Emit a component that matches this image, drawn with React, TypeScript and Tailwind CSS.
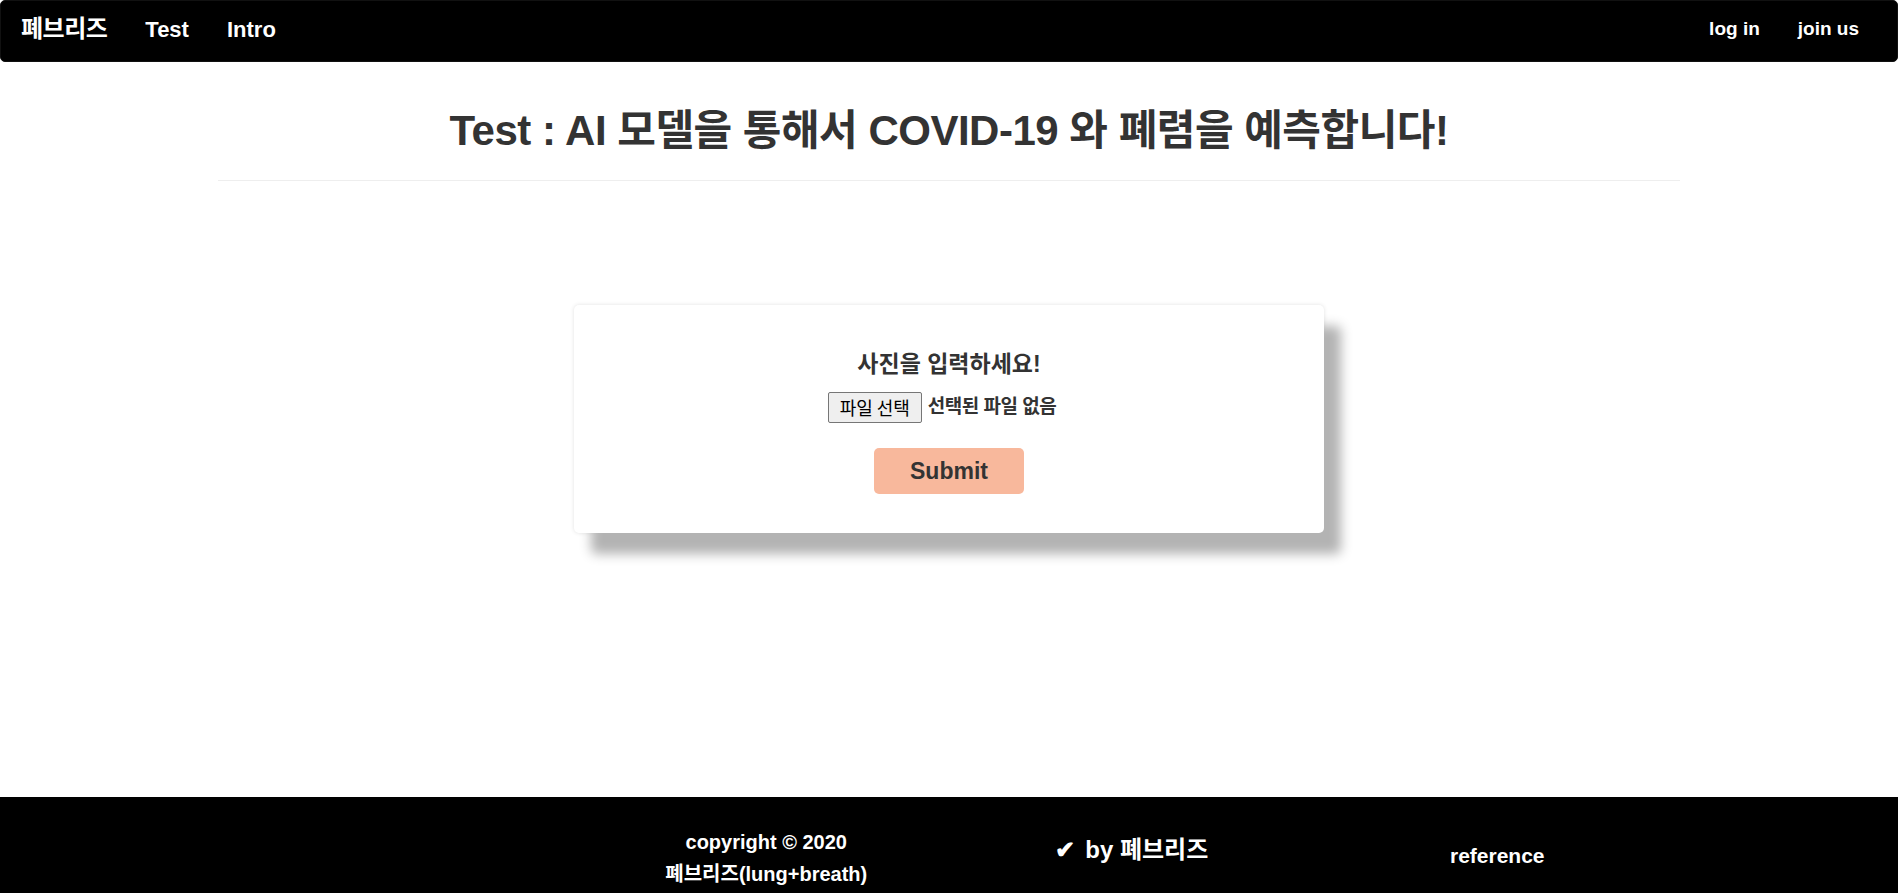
import React from "react";

const font = { fontFamily: '"Liberation Sans", "Noto Sans CJK KR", sans-serif' };

function Navbar() {
  return (
    <nav className="flex h-[62px] items-center justify-between rounded-[5px] border border-[#111] bg-black pb-1 font-bold text-white">
      <div className="flex items-center">
        <a className="pl-5 pr-[19px] text-[24px] tracking-[-0.5px]">폐브리즈</a>
        <a className="px-[19px] text-[22px]">Test</a>
        <a className="px-[19px] text-[22px]">Intro</a>
      </div>
      <div className="flex items-center pr-[19px]">
        <a className="px-[19px] text-[19px]">log in</a>
        <a className="px-[19px] text-[19px]">join us</a>
      </div>
    </nav>
  );
}

function UploadCard() {
  return (
    <div className="mx-auto mt-[124px] flex h-[228px] w-[750px] flex-col items-center rounded-[5px] bg-white pt-[45px] text-[#333] shadow-[17px_21px_12px_#b3b3b3,0_0_4px_rgba(0,0,0,0.12)]">
      <h3 className="text-[23px] font-bold leading-[28px]">사진을 입력하세요!</h3>
      <div className="mt-[14px] flex items-center pr-[14px]">
        <button
          className="h-[31px] w-[94px] rounded-[2px] border border-[#767676] bg-[#efefef] text-[18px] font-normal text-black"
          style={{ fontFamily: '"Noto Sans CJK KR", sans-serif' }}
        >
          파일 선택
        </button>
        <span className="ml-[6px] text-[19px] font-bold tracking-[-0.5px]">선택된 파일 없음</span>
      </div>
      <button className="mt-[25px] h-[46px] w-[150px] rounded-[5px] bg-[#f8b89c] text-[23px] font-bold text-[#333]">
        Submit
      </button>
    </div>
  );
}

function Footer() {
  return (
    <footer className="h-[110px] bg-black text-white">
      <div className="mx-auto grid w-[1462px] grid-cols-4 font-bold">
        <div />
        <div className="flex flex-col items-center pt-[29px] text-[20px] leading-[32px]">
          <span>copyright © 2020</span>
          <span>폐브리즈(lung+breath)</span>
        </div>
        <div className="flex items-start justify-center pt-[35px] text-[24px]">
          <span className="mr-[10px]">✔</span>
          <span>by 폐브리즈</span>
        </div>
        <div className="flex justify-center pt-[43px] text-[21px]">reference</div>
      </div>
    </footer>
  );
}

export default function App() {
  return (
    <div className="min-h-screen bg-white" style={font}>
      <Navbar />
      <main className="h-[735px]">
        <div className="mx-auto w-[1462px]">
          <h1 className="pt-[44px] pb-[24px] text-center text-[42px] font-bold leading-[50px] tracking-[-0.5px] text-[#333]">
            Test : AI 모델을 통해서 COVID-19 와 폐렴을 예측합니다!
          </h1>
          <hr className="border-t border-[#eee]" />
        </div>
        <UploadCard />
      </main>
      <Footer />
    </div>
  );
}
